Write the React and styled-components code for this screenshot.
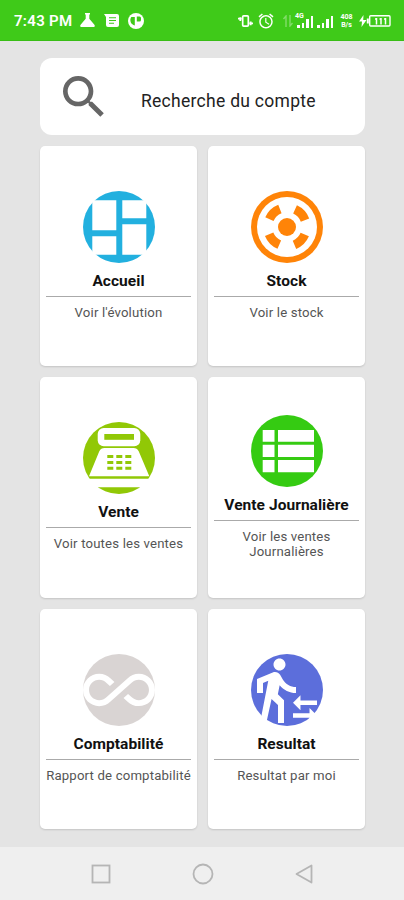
import React from "react";
import styled, { createGlobalStyle } from "styled-components";
import { MdAlarm, MdSearch } from "react-icons/md";

const GlobalStyle = createGlobalStyle`
  * {
    box-sizing: border-box;
  }
  body {
    margin: 0;
    background-color: #e4e4e4;
    font-family: Roboto, "Liberation Sans", sans-serif;
  }
  svg {
    display: block;
    flex-shrink: 0;
  }
`;

const Screen = styled.div`
  display: flex;
  flex-direction: column;
  width: 404px;
  height: 900px;
  background-color: #e4e4e4;
`;

const StatusBar = styled.header`
  display: flex;
  align-items: center;
  justify-content: space-between;
  height: 41px;
  padding: 1px 13px 0 14px;
  background-color: #3fca19;
  border-bottom: 1px solid #38bd15;
  color: #fff;
`;

const StatusGroup = styled.div`
  display: flex;
  align-items: center;
  gap: ${(props) => props.$gap}px;
`;

const Clock = styled.span`
  width: 57px;
  font-size: 15px;
  font-weight: 600;
  letter-spacing: 0.3px;
  white-space: nowrap;
`;

const Speed = styled.div`
  width: 13px;
  margin: 0 2px 0 3px;
  font-size: 7px;
  font-weight: 700;
  line-height: 8px;
  text-align: center;
`;

const Main = styled.main`
  flex: 1;
  display: flex;
  flex-direction: column;
  gap: 11px;
  padding: 17px 39px 18px 40px;
`;

const SearchBox = styled.div`
  display: flex;
  align-items: center;
  height: 77px;
  padding-left: 16px;
  border-radius: 12px;
  background-color: #fff;
  color: #666;
`;

const SearchLabel = styled.span`
  margin: 8px 0 0 29px;
  font-size: 17.5px;
  letter-spacing: 0.28px;
  color: #222;
`;

const Grid = styled.div`
  flex: 1;
  display: grid;
  grid-template-columns: 1fr 1fr;
  grid-template-rows: repeat(3, 1fr);
  gap: 11px;
`;

const Card = styled.div`
  display: flex;
  flex-direction: column;
  align-items: center;
  justify-content: center;
  padding: 0 6px 1px;
  border-radius: 5px;
  background-color: #fff;
  box-shadow: 0 1px 2px rgba(0, 0, 0, 0.14);
`;

const Title = styled.div`
  height: 33px;
  font-size: 15.5px;
  font-weight: 700;
  line-height: 36px;
  letter-spacing: 0.05px;
  color: #111;
  white-space: nowrap;
`;

const Divider = styled.div`
  width: 100%;
  height: 1px;
  background-color: #aaa;
`;

const Text = styled.div`
  margin-top: 8px;
  font-size: 13.2px;
  line-height: 15px;
  letter-spacing: 0.16px;
  text-align: center;
  white-space: pre;
  color: #555;
`;

const NavBar = styled.nav`
  display: flex;
  align-items: center;
  justify-content: space-between;
  height: 53px;
  padding: 0 91px 0 91px;
  background-color: #efefef;
`;

function Badge({ color, children }) {
  return (
    <svg width="72" height="72" viewBox="0 0 72 72">
      <circle cx="36" cy="36" r="36" fill={color} />
      {children}
    </svg>
  );
}

const HomeIcon = () => (
  <Badge color="#22b0df">
    <path
      fill="#fff"
      d="M9.3 9.3h24v30h-24zM9.3 45.3h24v18.4h-24zM39.3 9.3h24v18h-24zM39.3 33.3h24v30.4h-24z"
    />
  </Badge>
);

const StockIcon = () => (
  <Badge color="#ff8408">
    <circle cx="36" cy="36" r="30" fill="#fff" />
    <circle cx="36" cy="36" r="9" fill="#ff8408" />
    <circle
      cx="36"
      cy="36"
      r="19.3"
      fill="none"
      stroke="#ff8408"
      strokeWidth="9"
      strokeDasharray="14.8 15.516"
      transform="rotate(23 36 36)"
    />
  </Badge>
);

const SaleIcon = () => (
  <Badge color="#91c806">
    <rect x="14.7" y="6" width="42.6" height="18.3" rx="6" fill="#fff" />
    <rect x="21.3" y="12" width="29.7" height="5.8" fill="#91c806" />
    <path
      fill="#fff"
      d="M21.5 26h29c2.5 0 4 1 5.2 3.2L66.3 54.3H6L16.3 29.2C17.5 27 19 26 21.5 26zM2 56.8h68v8.5H2z"
    />
    <path
      stroke="#91c806"
      strokeWidth="3"
      strokeDasharray="6 3"
      d="M24.3 34.5h24M24.3 40.5h24M24.3 46.3h24"
    />
  </Badge>
);

const TableIcon = () => (
  <Badge color="#35cb12">
    <path
      fill="#fff"
      d="M11.7 15h11.8v11.8H11.7zM27 15h36v11.8H27zM11.7 29.8h11.8V42H11.7zM27 29.8h36V42H27zM11.7 45h11.8v12.3H11.7zM27 45h36v12.3H27z"
    />
  </Badge>
);

const InfinityIcon = () => (
  <Badge color="#d9d4d3">
    <path
      fill="#fff"
      transform="scale(3)"
      d="M18.6 6.62c-1.44 0-2.8.56-3.77 1.53L7.8 14.39c-.64.64-1.49.99-2.4.99-1.87 0-3.39-1.51-3.39-3.38S3.53 8.62 5.4 8.62c.91 0 1.76.35 2.44 1.03l1.13 1 1.51-1.34L9.22 8.2C8.2 7.18 6.84 6.62 5.4 6.62 2.42 6.62 0 9.04 0 12s2.42 5.38 5.4 5.38c1.44 0 2.8-.56 3.77-1.53l7.03-6.24c.64-.64 1.49-.99 2.4-.99 1.87 0 3.39 1.51 3.39 3.38s-1.52 3.38-3.39 3.38c-.9 0-1.76-.35-2.44-1.03l-1.14-1.01-1.51 1.34 1.27 1.12c1.02 1.01 2.37 1.57 3.82 1.57 2.98 0 5.4-2.41 5.4-5.38s-2.42-5.37-5.4-5.37z"
    />
  </Badge>
);

const WalkIcon = () => (
  <Badge color="#5c6edb">
    <path
      fill="#fff"
      transform="scale(3)"
      d="M16.49 15.5v-1.75L14 16.25l2.49 2.5V17H22v-1.5zM19.51 19.75H14v1.5h5.51V23L22 20.5 19.51 18zM9.5 5.5c1.1 0 2-.9 2-2s-.9-2-2-2-2 .9-2 2 .9 2 2 2zM5.75 8.9L3 23h2.1l1.75-8L9 17v6h2v-7.55L8.95 13.4l.6-3C10.85 12 12.8 13 15 13v-2c-1.85 0-3.45-1-4.35-2.45l-.95-1.6C9.35 6.35 8.7 6 8 6c-.25 0-.5.05-.75.15L2 8.3V13h2V9.65l1.75-.75"
    />
  </Badge>
);

const FlaskIcon = () => (
  <svg width="15" height="15" viewBox="0 0 15 15" fill="#fff">
    <path d="M5 0h5v1.5H9.3v4.3l4.9 5.7c1.2 1.6.5 2.5-1 2.5H1.8C.3 14-.4 13.1.8 11.5l4.9-5.7V1.5H5z" />
  </svg>
);

const MessageIcon = () => (
  <svg width="15" height="14" viewBox="0 0 15 14">
    <path fill="#fff" d="M0 0h13a2 2 0 0 1 2 2v9a2 2 0 0 1-2 2H4a2 2 0 0 1-2-2V3z" />
    <path stroke="#3fca19" strokeWidth="1.1" d="M5 3.8h7M5 6.5h7M5 9.2h5" />
  </svg>
);

const AppIcon = () => (
  <svg width="16" height="16" viewBox="0 0 16 16">
    <circle cx="8" cy="8" r="8" fill="#fff" />
    <path
      fill="#3fca19"
      d="M3.3 4h3.5v8.5A5.5 5.5 0 0 1 3.3 4zM8.8 3.6h2.7a1.5 1.5 0 0 1 1.5 1.5v2a1.5 1.5 0 0 1-1.5 1.5H8.8z"
    />
  </svg>
);

const VibrateIcon = () => (
  <svg width="15" height="14" viewBox="0 0 16 14" fill="none" stroke="#fff">
    <rect x="5" y="1.5" width="6" height="11" rx="1" strokeWidth="1.8" />
    <path strokeWidth="2" d="M0 4.5h4M2.5 3v4M12 9.5h4M13.5 7.5v4" />
  </svg>
);

const DataIcon = () => (
  <svg width="14" height="12" viewBox="-4 0 14 12" fill="none" stroke="#fff" opacity="0.35">
    <path strokeWidth="1.4" d="M3 12V1L.5 4M7 0v11l2.5-3" />
  </svg>
);

const Bars = styled.div`
  display: flex;
  align-items: flex-end;
  gap: 2px;
  position: relative;
  height: 14px;

  i {
    width: 2.5px;
    background-color: #fff;
  }
`;

const Network = styled.span`
  position: absolute;
  left: -2px;
  top: -1px;
  font-size: 7px;
  font-weight: 700;
  line-height: 7px;
`;

const Bar = styled.i`
  height: ${(props) => props.$h}px;
`;

function Signal({ label }) {
  return (
    <Bars>
      {label && <Network>{label}</Network>}
      {[2.5, 5, 8.5, 12].map((h) => (
        <Bar key={h} $h={h} />
      ))}
    </Bars>
  );
}

const BatteryIcon = () => (
  <svg width="32" height="12" viewBox="0 0 32 12">
    <path fill="#fff" d="M4.5 0L0 6.5h3L2.5 12 7.5 5H4.2z" />
    <rect x="10.7" y=".8" width="20.3" height="10.2" rx="1" fill="none" stroke="#fff" strokeWidth="1.4" />
    <path stroke="#fff" strokeWidth="2" d="M8.8 3.5v5" />
    <path
      stroke="#fff"
      strokeWidth="1.5"
      d="M17.5 3v6.5M22 3v6.5M26.5 3v6.5M16 4h1.5M20.5 4H22M25 4h1.5"
    />
  </svg>
);

const menus = [
  { title: "Accueil", text: "Voir l'évolution", icon: HomeIcon },
  { title: "Stock", text: "Voir le stock", icon: StockIcon },
  { title: "Vente", text: "Voir toutes les ventes", icon: SaleIcon },
  { title: "Vente Journalière", text: "Voir les ventes\nJournalières", icon: TableIcon },
  { title: "Comptabilité", text: "Rapport de comptabilité", icon: InfinityIcon },
  { title: "Resultat", text: "Resultat par moi", icon: WalkIcon },
];

export default function App() {
  return (
    <Screen>
      <GlobalStyle />
      <StatusBar>
        <StatusGroup $gap={9}>
          <Clock>7:43 PM</Clock>
          <FlaskIcon />
          <MessageIcon />
          <AppIcon />
        </StatusGroup>
        <StatusGroup $gap={4}>
          <VibrateIcon />
          <MdAlarm size={18} />
          <DataIcon />
          <Signal label="4G" />
          <Signal />
          <Speed>408 B/s</Speed>
          <BatteryIcon />
        </StatusGroup>
      </StatusBar>
      <Main>
        <SearchBox>
          <MdSearch size={56} />
          <SearchLabel>Recherche du compte</SearchLabel>
        </SearchBox>
        <Grid>
          {menus.map((menu) => {
            const Icon = menu.icon;
            return (
              <Card key={menu.title}>
                <Icon />
                <Title>{menu.title}</Title>
                <Divider />
                <Text>{menu.text}</Text>
              </Card>
            );
          })}
        </Grid>
      </Main>
      <NavBar>
        <svg width="20" height="20" viewBox="0 0 20 20" fill="none" stroke="#b5b5b5" strokeWidth="1.8">
          <rect x="1.5" y="1.5" width="17" height="17" />
        </svg>
        <svg width="22" height="22" viewBox="0 0 22 22" fill="none" stroke="#b5b5b5" strokeWidth="1.8">
          <circle cx="11" cy="11" r="9.5" />
        </svg>
        <svg width="18" height="20" viewBox="0 0 18 20" fill="none" stroke="#b5b5b5" strokeWidth="1.8">
          <path d="M16.5 1.5v17L1.5 10z" strokeLinejoin="round" />
        </svg>
      </NavBar>
    </Screen>
  );
}
